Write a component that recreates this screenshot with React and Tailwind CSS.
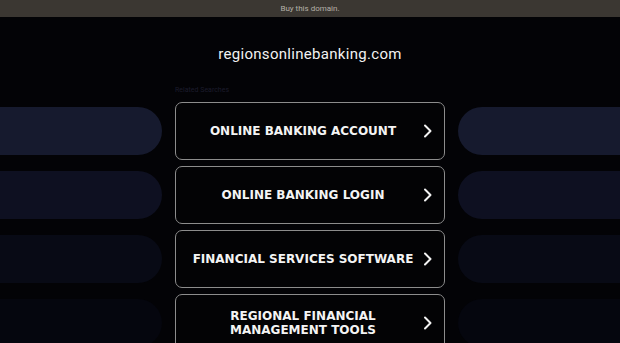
import React from "react";

const rows = [
  { label: ["ONLINE BANKING ACCOUNT"], pill: "bg-[#161a2e]" },
  { label: ["ONLINE BANKING LOGIN"], pill: "bg-[#0e1021]" },
  { label: ["FINANCIAL SERVICES SOFTWARE"], pill: "bg-[#080a15]" },
  { label: ["REGIONAL FINANCIAL", "MANAGEMENT TOOLS"], pill: "bg-[#05060e]" },
];

function Chevron() {
  return (
    <svg width="12" height="14" viewBox="0 0 12 14" className="shrink-0">
      <path d="M3 1.5 L8.5 7 L3 12.5" fill="none" stroke="#f2f2f2" strokeWidth="2" strokeLinecap="round" strokeLinejoin="round" />
    </svg>
  );
}

export default function App() {
  return (
    <div className="w-[620px] h-[343px] overflow-hidden bg-[#030306] flex flex-col">
      <div className="h-[17px] shrink-0 bg-[#3b3732] flex items-center justify-center">
        <span className="text-[8px] text-[#b5b0a8]" style={{ fontFamily: "Roboto, 'Liberation Sans', sans-serif" }}>Buy this domain.</span>
      </div>
      <div className="h-[74px] shrink-0 flex items-center justify-center pt-[1px]">
        <span className="text-[15px] text-[#f2f2f2] tracking-[0.3px]" style={{ fontFamily: "Roboto, 'Liberation Sans', sans-serif" }}>regionsonlinebanking.com</span>
      </div>
      <div className="shrink-0 grid grid-cols-[1fr_270px_1fr] gap-x-[13px] gap-y-[6px] -mt-[6px]">
        <div></div>
        <div className="text-[7px] text-[#1c1c2c] h-[11px] leading-[11px]" style={{ fontFamily: "Roboto, 'Liberation Sans', sans-serif" }}>Related Searches</div>
        <div></div>
        {rows.map((r, i) => (
          <React.Fragment key={i}>
            <div className="flex items-center">
              <div className={`h-[48px] w-full rounded-r-full ${r.pill}`}></div>
            </div>
            <div className="h-[58px] border border-[#8c8c8c] rounded-[7px] bg-[#030305] flex items-center pl-[8px] pr-[10px]">
              <div className="flex-1 text-center text-[12px] font-bold text-[#f4f4f4] leading-[14px] whitespace-nowrap" style={{ fontFamily: "'DejaVu Sans', Verdana, sans-serif" }}>
                {r.label.map((l, j) => (
                  <div key={j}>{l}</div>
                ))}
              </div>
              <Chevron />
            </div>
            <div className="flex items-center">
              <div className={`h-[48px] w-full rounded-l-full ${r.pill}`}></div>
            </div>
          </React.Fragment>
        ))}
      </div>
    </div>
  );
}
